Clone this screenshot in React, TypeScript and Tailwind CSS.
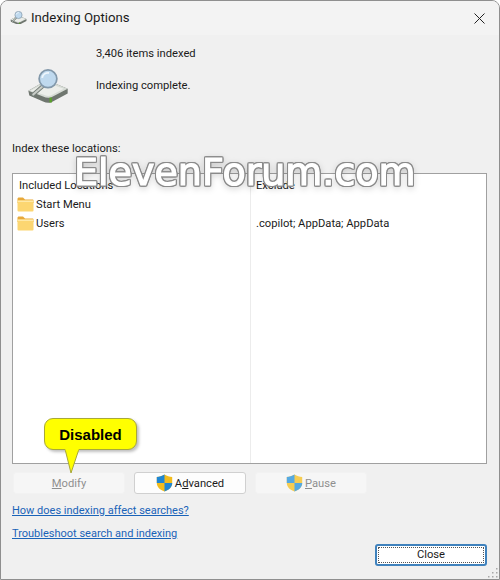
import type { ReactNode } from 'react';

const FONT = 'font-["Roboto","Noto_Sans",sans-serif]';

const ROWS = [
  { name: 'Start Menu', exclude: '' },
  { name: 'Users', exclude: '.copilot; AppData; AppData' },
];

const Shield = ({ muted }: { muted?: boolean }) => (
  <svg width="17" height="18" viewBox="0 0 17 18" className="shrink-0">
    <path d="M8.5 .5 C6 2 3.5 2.8 .8 3 V9 C.8 13 4 16 8.5 17.5 C13 16 16.2 13 16.2 9 V3 C13.5 2.8 11 2 8.5 .5Z" fill={muted ? '#f6cd52' : '#f2bc1c'} />
    <path d="M8.5 .5 C6 2 3.5 2.8 .8 3 V9 H8.5Z" fill={muted ? '#55a9e2' : '#1f86d3'} />
    <path d="M8.5 9 H16.2 C16.2 13 13 16 8.5 17.5Z" fill={muted ? '#55a9e2' : '#1f86d3'} />
  </svg>
);

const Folder = () => (
  <svg width="17" height="15" viewBox="0 0 17 15" className="shrink-0">
    <path d="M.5 2 C.5 1 1 .5 2 .5 H6 L8 2.5 H15.5 C16.2 2.5 16.5 3 16.5 3.5 V6 H.5Z" fill="#e8a93a" />
    <rect x=".5" y="3.5" width="16" height="11" rx="1" fill="#fcd671" />
    <rect x=".5" y="3.5" width="16" height="1.5" fill="#fee9a8" />
  </svg>
);

const DriveIcon = ({ size = 42 }: { size?: number }) => (
  <svg width={size} height={size * 0.82} viewBox="0 0 42 35">
    <path d="M1 22 L2 27 L16 33 Q20 35 24 34 L41 25 L41 20 L24 13 Q20 12 17 13Z" fill="#6f766f" />
    <path d="M1 22 L17 13 Q20 12 24 13 L41 20 L24 29 Q20 30 16 28Z" fill="#d6dbd5" />
    <path d="M3 22 L17 15 Q20 14 23 15 L37 20 L24 27 Q20 28 16 26Z" fill="#eceeea" />
    <rect x="22.5" y="29" width="2.5" height="5" fill="#5aa02c" />
    <path d="M15 18 L6 26" stroke="#77807a" strokeWidth="4" strokeLinecap="round" />
    <path d="M15 18 L6 26" stroke="#c9cdc8" strokeWidth="2" strokeLinecap="round" />
    <circle cx="21" cy="10" r="9" fill="#bfd9ee" stroke="#8298aa" strokeWidth="1.8" />
    <path d="M15 9 A6.5 6.5 0 0 1 22 4" stroke="#eef6fc" strokeWidth="2" fill="none" />
  </svg>
);

const WinButton = ({ children, disabled }: { children: ReactNode; disabled?: boolean }) => (
  <div
    className={`flex h-[22px] w-[112px] items-center justify-center gap-[2px] rounded-[3px] border text-[11.2px] ${
      disabled ? 'border-[#f2f2f2] bg-[#f6f6f6] text-[#8f8f8f]' : 'border-[#d0d0d0] bg-[#fdfdfd] text-[#1b1b1b]'
    }`}
  >
    {children}
  </div>
);

export default function App() {
  return (
    <div className={`relative h-[580px] w-[500px] overflow-hidden rounded-t-[8px] border border-[#8f8f8f] bg-[#f0f0f0] text-[11.2px] text-[#1b1b1b] ${FONT}`}>
      {/* title bar */}
      <div className="flex h-[34px] items-center bg-[#f3f3f3] pl-[9px] pr-[14px]">
        <div className="mr-[4px] h-[15px] overflow-hidden">
          <DriveIcon size={17} />
        </div>
        <span className="text-[13.2px]">Indexing Options</span>
        <svg width="11" height="11" viewBox="0 0 11 11" className="ml-auto" stroke="#222" strokeWidth="1">
          <path d="M.5 .5 L10.5 10.5 M10.5 .5 L.5 10.5" />
        </svg>
      </div>

      {/* status */}
      <div className="flex h-[105px] pl-[26px]">
        <div className="mt-[34px] w-[69px] shrink-0">
          <DriveIcon />
        </div>
        <div className="flex flex-col gap-[16px] pt-[11px]">
          <p className="h-[16px] leading-[16px]">3,406 items indexed</p>
          <p className="h-[16px] leading-[16px]">Indexing complete.</p>
        </div>
      </div>

      <p className="ml-[11px] h-[16px] pt-px leading-[16px]">Index these locations:</p>

      {/* locations list */}
      <div className="ml-[11px] mt-[17px] flex h-[291px] w-[475px] border border-[#a0a0a0] bg-white">
        <div className="w-[238px] shrink-0 border-r border-[#ececec] pl-[4px] pt-[3px]">
          <div className="h-[18px] pl-[2px] leading-[18px]">Included Locations</div>
          {ROWS.map((row) => (
            <div key={row.name} className="flex h-[19px] items-center gap-[2px]">
              <Folder />
              <span className="pt-[2px]">{row.name}</span>
            </div>
          ))}
        </div>
        <div className="flex-1 pl-[5px] pt-[3px]">
          <div className="h-[18px] leading-[18px]">Exclude</div>
          {ROWS.map((row) => (
            <div key={row.name} className="h-[19px] leading-[19px]">
              {row.exclude}
            </div>
          ))}
        </div>
      </div>

      {/* actions */}
      <div className="ml-[12px] mt-[8px] flex gap-[9px]">
        <WinButton disabled>
          <span className="pt-[2px]">
            <span className="underline">M</span>odify
          </span>
        </WinButton>
        <WinButton>
          <Shield />
          <span className="pt-[2px]">
            A<span className="underline">d</span>vanced
          </span>
        </WinButton>
        <WinButton disabled>
          <Shield muted />
          <span className="pt-[2px]">
            <span className="underline">P</span>ause
          </span>
        </WinButton>
      </div>

      <div className="ml-[11px] mt-[9px] flex flex-col items-start gap-[7px] text-[11px] text-[#1a63b8]">
        <a className="h-[16px] leading-[16px] underline">How does indexing affect searches?</a>
        <a className="h-[16px] leading-[16px] underline">Troubleshoot search and indexing</a>
      </div>

      <div className="mr-[12px] mt-[2px] flex justify-end">
        <div className="rounded-[3px] border-2 border-[#3f82bd] bg-white p-px">
          <div className="flex h-[16px] w-[106px] items-center justify-center border border-dotted border-[#555] pt-px text-[11.2px]">
            Close
          </div>
        </div>
      </div>

      {/* resize grip */}
      <svg width="10" height="10" viewBox="0 0 10 10" className="absolute bottom-px right-px" fill="#a8a8a8">
        <rect x="8" y="0" width="1.5" height="1.5" />
        <rect x="4" y="4" width="1.5" height="1.5" />
        <rect x="8" y="4" width="1.5" height="1.5" />
        <rect x="0" y="8" width="1.5" height="1.5" />
        <rect x="4" y="8" width="1.5" height="1.5" />
        <rect x="8" y="8" width="1.5" height="1.5" />
      </svg>

      {/* watermark */}
      <div className='absolute left-[73px] top-[149px] font-["DejaVu_Sans",sans-serif] text-[38px] leading-[44px] text-white [-webkit-text-stroke:1.2px_#ffffff] [filter:drop-shadow(1px_0_0_#8a8a8a)_drop-shadow(-1px_0_0_#8a8a8a)_drop-shadow(0_1px_0_#8a8a8a)_drop-shadow(0_-1px_0_#8a8a8a)_drop-shadow(0_2px_3px_rgba(0,0,0,0.15))]'>
        ElevenForum.com
      </div>

      {/* callout */}
      <div className="absolute left-[43px] top-[417px]">
        <div className="flex h-[32px] w-[93px] items-center justify-center rounded-[9px] border border-[#a8a83a] bg-[#ffff00] pt-[2px] font-['Liberation_Sans',sans-serif] text-[15px] font-bold text-black shadow-[2px_2px_3px_rgba(0,0,0,0.25)]">
          Disabled
        </div>
        <svg width="16" height="26" viewBox="0 0 16 26" className="absolute left-[20px] top-[30px]">
          <path d="M1 1 L7 25 L15 1Z" fill="#ffff00" />
          <path d="M1 1 L7 25 L15 1" fill="none" stroke="#a8a83a" />
          <rect x="1.5" y="0" width="13" height="2.5" fill="#ffff00" />
        </svg>
      </div>
    </div>
  );
}
